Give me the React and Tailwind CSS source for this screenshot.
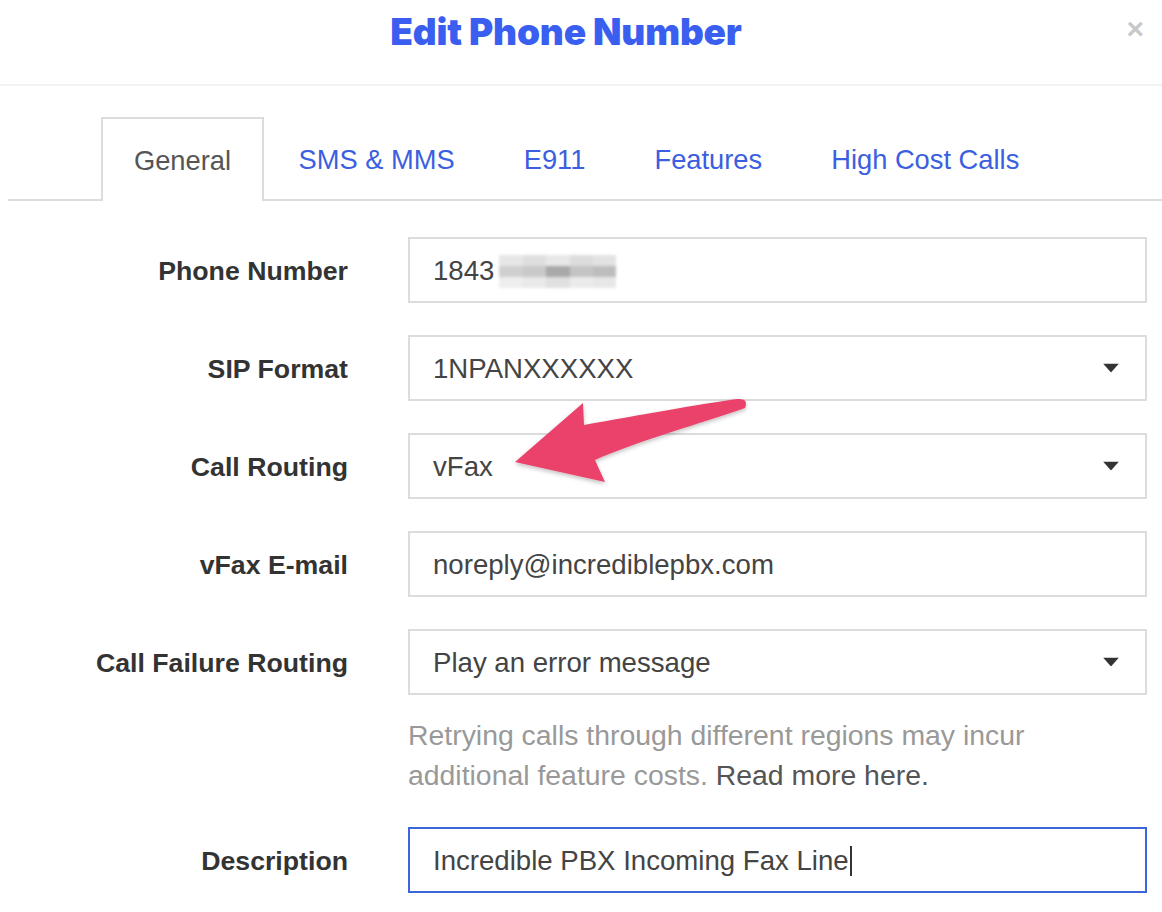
import { useState } from "react";

const tabs = ["General", "SMS & MMS", "E911", "Features", "High Cost Calls"];

function Caret() {
  return (
    <svg width="16" height="9" viewBox="0 0 16 9" className="absolute right-[26px] top-1/2 -translate-y-1/2">
      <path d="M0 0 L16 0 L8 9 Z" fill="#333" />
    </svg>
  );
}

function Row({ label, children }) {
  return (
    <div className="flex items-center">
      <div className="w-[348px] pt-[3px] text-right font-bold text-[26.7px] text-[#333]">{label}</div>
      <div className="ml-[60px] w-[739px]">{children}</div>
    </div>
  );
}

function Field({ children, select, focused }) {
  return (
    <div
      className={
        "relative flex h-[66px] items-center pt-[2px] px-[23px] text-[27.6px] text-[#444] bg-white " +
        (focused ? "border-2 border-[#3d67d8]" : "border-2 border-[#dcdcdc]")
      }
    >
      {children}
      {select && <Caret />}
    </div>
  );
}

export default function App() {
  const [tab] = useState("General");

  return (
    <div className="relative w-[1162px] h-[912px] overflow-hidden bg-white font-['Liberation_Sans',Arial,sans-serif]">
      {/* Header */}
      <div className="relative h-[86px] border-b-2 border-[#f2f2f2] flex justify-center">
        <h1 className="mt-[4px] ml-[-30px] font-['Inter',sans-serif] font-black text-[37px] tracking-[-0.2px] text-[#3a5ef0]">
          Edit Phone Number
        </h1>
        <span className="absolute right-[18px] top-[6px] text-[30px] font-bold text-[#c8c8c8]">×</span>
      </div>

      {/* Tabs */}
      <div className="mt-[31px] ml-[8px] flex border-b-2 border-[#dcdcdc] pl-[93px]">
        {tabs.map((t) =>
          t === tab ? (
            <div
              key={t}
              className="-mb-[2px] h-[84px] w-[163px] flex items-center justify-center pt-[2px] border-2 border-b-0 border-[#dcdcdc] bg-white text-[27.3px] text-[#555]"
            >
              {t}
            </div>
          ) : (
            <div key={t} className="h-[82px] flex items-center pt-[4px] px-[34.5px] text-[27.3px] text-[#3b5fe0]">
              {t}
            </div>
          )
        )}
      </div>

      {/* Form */}
      <div className="mt-[36px] flex flex-col gap-[32px]">
        <Row label="Phone Number">
          <Field>
            <span>1843</span>
            <span className="ml-[5px] grid h-[33px] w-[117px] grid-cols-5 grid-rows-3 blur-[1.5px]">
              <span className="bg-[#e6e6e6]" />
              <span className="bg-[#dedede]" />
              <span className="bg-[#e8e8e8]" />
              <span className="bg-[#dcdcdc]" />
              <span className="bg-[#e2e2e2]" />
              <span className="bg-[#cfcfcf]" />
              <span className="bg-[#c9c9c9]" />
              <span className="bg-[#a9a9a9]" />
              <span className="bg-[#c4c4c4]" />
              <span className="bg-[#bdbdbd]" />
              <span className="bg-[#eeeeee]" />
              <span className="bg-[#e9e9e9]" />
              <span className="bg-[#e0e0e0]" />
              <span className="bg-[#ebebeb]" />
              <span className="bg-[#e7e7e7]" />
            </span>
          </Field>
        </Row>
        <Row label="SIP Format">
          <Field select>1NPANXXXXXX</Field>
        </Row>
        <Row label="Call Routing">
          <Field select>vFax</Field>
        </Row>
        <Row label="vFax E-mail">
          <Field>noreply@incrediblepbx.com</Field>
        </Row>
        <div className="flex flex-col">
          <Row label="Call Failure Routing">
            <Field select>Play an error message</Field>
          </Row>
          <p className="ml-[408px] mt-[20px] w-[660px] text-[28.4px] leading-[40px] text-[#999]">
            Retrying calls through different regions may incur
            <br />
            additional feature costs. <span className="text-[#555]">Read more here.</span>
          </p>
        </div>
        <Row label="Description">
          <Field focused>
            <span>Incredible PBX Incoming Fax Line</span>
            <span className="ml-[1px] h-[30px] w-[2px] bg-[#333]" />
          </Field>
        </Row>
      </div>

      {/* Annotation arrow */}
      <svg className="absolute left-0 top-0 pointer-events-none" width="1162" height="912">
        <defs>
          <filter id="sh" x="-10%" y="-10%" width="120%" height="130%">
            <feDropShadow dx="0" dy="2" stdDeviation="2" floodColor="#000" floodOpacity="0.25" />
          </filter>
        </defs>
        <path
          d="M515 462 L583 403 L584 425 C640 415 700 404 737 399 Q749 398 745 408 C700 424 640 440 595 460 L605 482 Z"
          fill="#ea436b"
          filter="url(#sh)"
        />
      </svg>
    </div>
  );
}
